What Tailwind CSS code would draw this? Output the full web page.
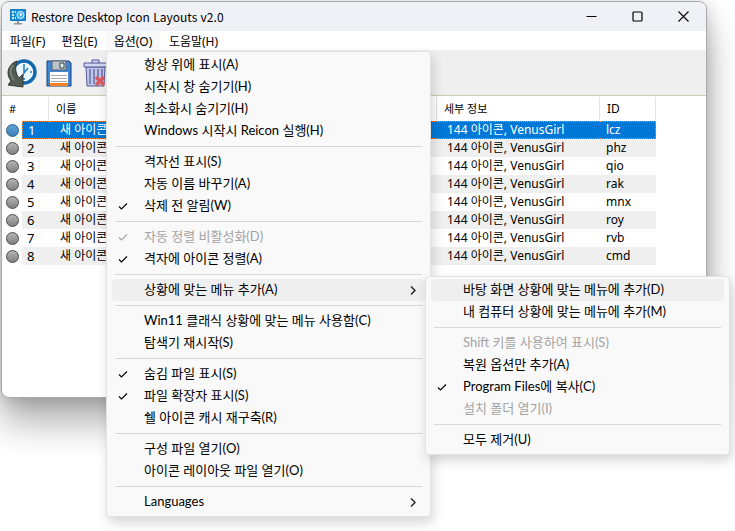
<!DOCTYPE html>
<html lang="ko">
<head>
    <meta charset="UTF-8">
    <meta name="viewport" content="width=device-width, initial-scale=1.0">
    <title>Restore Desktop Icon Layouts v2.0</title>
    <script src="https://cdn.jsdelivr.net/npm/@tailwindcss/browser@4"></script>
</head>
<body class="bg-white text-black min-h-screen overflow-hidden p-px pr-7 font-['Noto_Sans','Noto_Sans_CJK_KR',sans-serif]">

    <!-- Window -->
    <main class="rounded-lg border border-[#a9a9a9] bg-white pb-[132px] shadow-[0_24px_36px_rgba(0,0,0,0.32),0_2px_16px_rgba(0,0,0,0.18)]">

        <!-- Title bar -->
        <header class="flex h-[29px] items-center rounded-t-lg bg-[#f0f1f6] pl-2">
            <svg class="size-4" viewBox="0 0 16 16">
                <rect width="16" height="12" rx="1" fill="#1377bd"/>
                <path d="M1 1h14v10H1z" fill="#1b8fd6"/>
                <path d="M2 2h2v2H2zM2 5h2v2H2zM2 8h2v2H2zM5 2h1v2H5zM5 8h1v2H5z" fill="#c9ecff"/>
                <circle cx="10.500" cy="6" r="3.500" fill="#49b4ee" stroke="#d9f2ff"/>
                <path d="M10.500 4v2.500l1.500-1" fill="none" stroke="#fff"/>
                <path d="M7 12h2v2h3v1.500H4V14h3z" fill="#8b959c"/>
            </svg>
            <h1 class="ml-[5px] font-['Noto_Sans_CJK_KR',sans-serif] text-[12px]">Restore Desktop Icon Layouts v2.0</h1>
            <div class="ml-auto flex h-full">
                <button class="grid w-[45px] place-items-center" aria-label="최소화"><svg class="size-[11px]" viewBox="0 0 11 11"><path d="M.5 5.500h10" stroke="#000"/></svg></button>
                <button class="grid w-[46px] place-items-center" aria-label="최대화"><svg class="size-[11px]" viewBox="0 0 11 11"><rect x="1" y="1" width="9" height="9" rx="1" fill="none" stroke="#000" stroke-width="1.200"/></svg></button>
                <button class="grid w-[46px] place-items-center" aria-label="닫기"><svg class="size-[11px]" viewBox="0 0 11 11"><path d="M.5.5l10 10M10.500.5l-10 10" stroke="#000" stroke-width="1.100"/></svg></button>
            </div>
        </header>

        <!-- Menu bar -->
        <nav class="flex h-[19px] text-[12px] leading-[21px]">
            <button class="h-[19px] w-[51px]">파일(F)</button>
            <button class="h-[19px] w-[53px]">편집(E)</button>
            <div class="relative w-[54px]">
                <button class="h-[19px] w-full bg-[#f9f9f9]" aria-expanded="true">옵션(O)</button>
                <div id="optionsMenu" role="menu" class="absolute top-full left-0 z-10 mt-px w-[325px] rounded border border-[#e2e2e2] bg-[#f9f9f9] px-[5px] pt-[2px] pb-[3px] font-[Lato,'Noto_Sans_CJK_KR',sans-serif] text-[13px] shadow-[2px_6px_12px_rgba(0,0,0,0.16)]"></div>
            </div>
            <button class="h-[19px] w-[67px]">도움말(H)</button>
        </nav>

        <!-- Toolbar -->
        <div class="flex h-[46px] items-center gap-2 border-b border-[#cdc9b4] bg-[#efefef] pl-[5px]">
            <button aria-label="복원">
                <svg class="size-[30px]" viewBox="0 0 30 30">
                    <circle cx="17" cy="14" r="11" fill="#e9f6ff" stroke="#1269ad" stroke-width="3.500"/>
                    <circle cx="17" cy="14" r="8.500" fill="none" stroke="#fff"/>
                    <path d="M17 7v8l4-5M17 20v2M23 14h2M17 6v1" fill="none" stroke="#287fc0" stroke-width="1.600"/>
                    <path d="M10 3C4 5 1 10 1 15c0 4 2 6 3 8l-3 4 15 2V16l-4 4c-4-5-4-11-2-17z" fill="#535b54" stroke="#343a36"/>
                    <path d="M6 7C2 12 3 17 7 22" fill="none" stroke="#7d857c" stroke-width="1.500"/>
                </svg>
            </button>
            <button aria-label="저장">
                <svg class="size-7" viewBox="0 0 28 28">
                    <path d="M2 2h22l2 2v23H2z" fill="#4286d2" stroke="#153e80"/>
                    <path d="M7 2h14v9H7z" fill="#bcc3c9" stroke="#52616e"/>
                    <path d="M15 4h4v5h-4z" fill="#e9edf0" stroke="#384450"/>
                    <path d="M5 13h18v14H5z" fill="#fff"/>
                    <path d="M6 16.500h16M6 19.500h16M6 22.500h16" stroke="#a8adb2"/>
                    <path d="M5 24h18v3H5z" fill="#f58220"/>
                </svg>
            </button>
            <button aria-label="삭제">
                <svg class="size-7" viewBox="0 0 28 28">
                    <path d="M5 8h19l-1 19H6z" fill="#c3c8e8" stroke="#515796"/>
                    <path d="M3 4h23v4H3zM11 4V1h7v3" fill="#d1d5ef" stroke="#515796"/>
                    <path d="M9 10v15M13 10v15M17 10v15M21 10v15" stroke="#656bab" stroke-width="1.500"/>
                    <path d="M15 18l8 8M23 18l-8 8" stroke="#da5a5e" stroke-width="3.500"/>
                </svg>
            </button>
        </div>

        <!-- Saved layouts -->
        <div class="pt-px pr-[50px]">
            <table class="w-full table-fixed border-separate border-spacing-0 text-[12px] leading-4">
                <colgroup>
                    <col class="w-5">
                    <col class="w-[27px]">
                    <col>
                    <col class="w-[163px]">
                    <col class="w-14">
                </colgroup>
                <thead>
                    <tr class="h-6 text-left text-[11px]">
                        <th colspan="2" class="border-r border-[#e2e2e2] pl-[7px] font-normal">#</th>
                        <th class="border-r border-[#e2e2e2] pl-[7px] font-normal">이름</th>
                        <th class="border-r border-[#e2e2e2] pl-[7px] font-normal">세부 정보</th>
                        <th class="border-r border-[#e2e2e2] pl-[7px] text-[12px] font-normal">ID</th>
                    </tr>
                </thead>
                <tbody id="layoutList"></tbody>
            </table>
        </div>
    </main>

    <script>
        const layouts = ["lcz", "phz", "qio", "rak", "mnx", "roy", "rvb", "cmd"];

        const contextMenu = [
            { text: "바탕 화면 상황에 맞는 메뉴에 추가(D)", active: true },
            { text: "내 컴퓨터 상황에 맞는 메뉴에 추가(M)" },
            null,
            { text: "Shift 키를 사용하여 표시(S)", disabled: true },
            { text: "복원 옵션만 추가(A)" },
            { text: "Program Files에 복사(C)", checked: true },
            { text: "설치 폴더 열기(I)", disabled: true },
            null,
            { text: "모두 제거(U)" }
        ];

        const optionsMenu = [
            { text: "항상 위에 표시(A)" },
            { text: "시작시 창 숨기기(H)" },
            { text: "최소화시 숨기기(H)" },
            { text: "Windows 시작시 Reicon 실행(H)" },
            null,
            { text: "격자선 표시(S)" },
            { text: "자동 이름 바꾸기(A)" },
            { text: "삭제 전 알림(W)", checked: true },
            null,
            { text: "자동 정렬 비활성화(D)", checked: true, disabled: true },
            { text: "격자에 아이콘 정렬(A)", checked: true },
            null,
            { text: "상황에 맞는 메뉴 추가(A)", active: true, arrow: true, submenu: contextMenu },
            null,
            { text: "Win11 클래식 상황에 맞는 메뉴 사용함(C)" },
            { text: "탐색기 재시작(S)" },
            null,
            { text: "숨김 파일 표시(S)", checked: true },
            { text: "파일 확장자 표시(S)", checked: true },
            { text: "쉘 아이콘 캐시 재구축(R)" },
            null,
            { text: "구성 파일 열기(O)" },
            { text: "아이콘 레이아웃 파일 열기(O)" },
            null,
            { text: "Languages", arrow: true }
        ];

        function renderItem(item) {
            if (!item) return `<div role="separator" class="mx-[3px] my-1 h-px bg-[#d6d6d6]"></div>`;
            const check = item.checked ? `<svg class="size-[10px]" viewBox="0 0 10 10"><path d="M1 5.500l2.500 2.500L9 2.500" fill="none" stroke="currentColor" stroke-width="1.100"/></svg>` : "";
            const arrow = item.arrow ? `<svg class="mr-[9px] ml-auto h-[9px] w-[6px]" viewBox="0 0 6 9"><path d="M1 .5l4 4-4 4" fill="none" stroke="#222" stroke-width="1.400"/></svg>` : "";
            const submenu = item.submenu ? `
                <div role="menu" class="absolute top-0 left-full z-20 -mt-[3px] w-[305px] rounded border border-[#e2e2e2] bg-[#f9f9f9] px-[5px] pt-[2px] pb-[3px] shadow-[2px_6px_12px_rgba(0,0,0,0.16)]">
                    ${item.submenu.map(renderItem).join("")}
                </div>` : "";
            return `
                <div class="relative">
                    <button role="menuitem" class="flex h-[22px] w-full items-center rounded leading-5 ${item.active ? "bg-[#efefef]" : ""} ${item.disabled ? "text-[#a3a3a3]" : ""}" ${item.disabled ? "disabled" : ""}>
                        <span class="w-8 shrink-0 pl-1.5">${check}</span>
                        <span class="whitespace-nowrap pb-0.5">${item.text}</span>
                        ${arrow}
                    </button>
                    ${submenu}
                </div>`;
        }

        function renderLayouts() {
            document.getElementById("layoutList").innerHTML = layouts.map((id, i) => {
                const selected = i === 0;
                const cell = selected ? "border-y border-dotted border-[#ff8c2b] bg-[#0078d7] text-white" : i % 2 ? "bg-[#efefef]" : "";
                return `
                <tr class="h-[18px]">
                    <td class="pl-1"><div class="size-[13px] rounded-full border bg-linear-to-b ${selected ? "border-[#2b5f8c] from-[#5fa3d6] to-[#3a80b8]" : "border-[#4a4a4a] from-[#b5b5b5] to-[#808080]"}"></div></td>
                    <td class="pl-[5px] text-[13px] ${cell} ${selected ? "border-l" : ""}">${i + 1}</td>
                    <td class="pl-[11px] ${cell}">새 아이콘</td>
                    <td class="pl-[10px] whitespace-nowrap ${cell}">144 아이콘, VenusGirl</td>
                    <td class="pl-[6px] ${cell} ${selected ? "border-r" : ""}">${id}</td>
                </tr>`;
            }).join("");
        }

        document.getElementById("optionsMenu").innerHTML = optionsMenu.map(renderItem).join("");
        renderLayouts();
    </script>

</body>
</html>
